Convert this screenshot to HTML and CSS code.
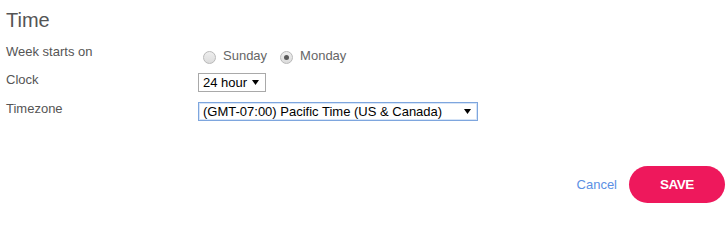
FILE: index.html
```html
<!DOCTYPE html>
<html lang="en">
<head>
<meta charset="utf-8">
<title>Time settings</title>
<link rel="stylesheet" href="styles.css">
</head>
<body>
<div class="page">
  <h2 class="title">Time</h2>
  <div class="form">
    <div class="row row-week">
      <div class="label">Week starts on</div>
      <div class="control radios">
        <label class="radio"><span class="dot"></span>Sunday</label>
        <label class="radio"><span class="dot checked"></span>Monday</label>
      </div>
    </div>
    <div class="row">
      <div class="label">Clock</div>
      <div class="control">
        <div class="select select-clock"><span>24 hour</span><svg class="arrow" width="7" height="5" viewBox="0 0 7 5"><path d="M0 0H7L3.5 5Z" fill="#000"/></svg></div>
      </div>
    </div>
    <div class="row">
      <div class="label">Timezone</div>
      <div class="control">
        <div class="select select-tz focus"><span>(GMT-07:00) Pacific Time (US &amp; Canada)</span><svg class="arrow" width="7" height="5" viewBox="0 0 7 5"><path d="M0 0H7L3.5 5Z" fill="#000"/></svg></div>
      </div>
    </div>
  </div>
  <div class="actions">
    <a class="cancel">Cancel</a>
    <button class="save">SAVE</button>
  </div>
</div>
</body>
</html>
```

FILE: styles.css
```css
html, body {
  margin: 0;
  padding: 0;
  background: #fff;
}
.page {
  font-family: "Liberation Sans", Arial, sans-serif;
  font-size: 13px;
  line-height: 16px;
  color: #555;
  padding: 8px 3px 0 6px;
  width: 719px;
}
.title {
  margin: 0;
  font-size: 20px;
  line-height: 24px;
  font-weight: normal;
  color: #555;
}
.form {
  margin-top: 12px;
}
.row {
  display: flex;
  height: 29px;
}
.row-week {
  height: 28px;
}
.label {
  width: 192px;
  flex: none;
}
.control {
  flex: 1;
}
.radios {
  display: flex;
  padding-top: 4px;
  padding-left: 5px;
  color: #666;
}
.radio {
  display: flex;
  align-items: center;
  height: 16px;
  margin-right: 13px;
}
.dot {
  width: 13px;
  height: 13px;
  box-sizing: border-box;
  border: 1px solid #b9b9b9;
  border-radius: 50%;
  background: linear-gradient(#eeeeee, #dcdcdc);
  margin-right: 7px;
  margin-top: 2px;
  position: relative;
}
.dot.checked::after {
  content: "";
  position: absolute;
  left: 3px;
  top: 3px;
  width: 5px;
  height: 5px;
  border-radius: 50%;
  background: #5a5a5a;
}
.select {
  display: inline-flex;
  align-items: center;
  box-sizing: border-box;
  height: 19px;
  margin-top: 1px;
  border: 1px solid #a9a9a9;
  background: #fff;
  color: #000;
  padding: 0 6px 0 4px;
}
.select span {
  flex: 1;
  white-space: nowrap;
}
.select-clock .arrow {
  margin-left: 5px;
}
.select-tz {
  width: 280px;
}
.select.focus {
  border-color: #7ea6de;
  box-shadow: inset 0 0 0 1px #d6e4f7;
}
.arrow {
  flex: none;
  display: block;
}
.actions {
  display: flex;
  justify-content: flex-end;
  align-items: center;
  margin-top: 36px;
}
.cancel {
  color: #5b90e4;
  font-size: 13px;
  margin-right: 12px;
  cursor: pointer;
}
.save {
  width: 96px;
  height: 37px;
  border: none;
  border-radius: 19px;
  background: #ee185c;
  color: #fff;
  font-family: "Liberation Sans", Arial, sans-serif;
  font-weight: bold;
  font-size: 13.5px;
  letter-spacing: -0.5px;
  padding: 0;
  cursor: pointer;
}
```
